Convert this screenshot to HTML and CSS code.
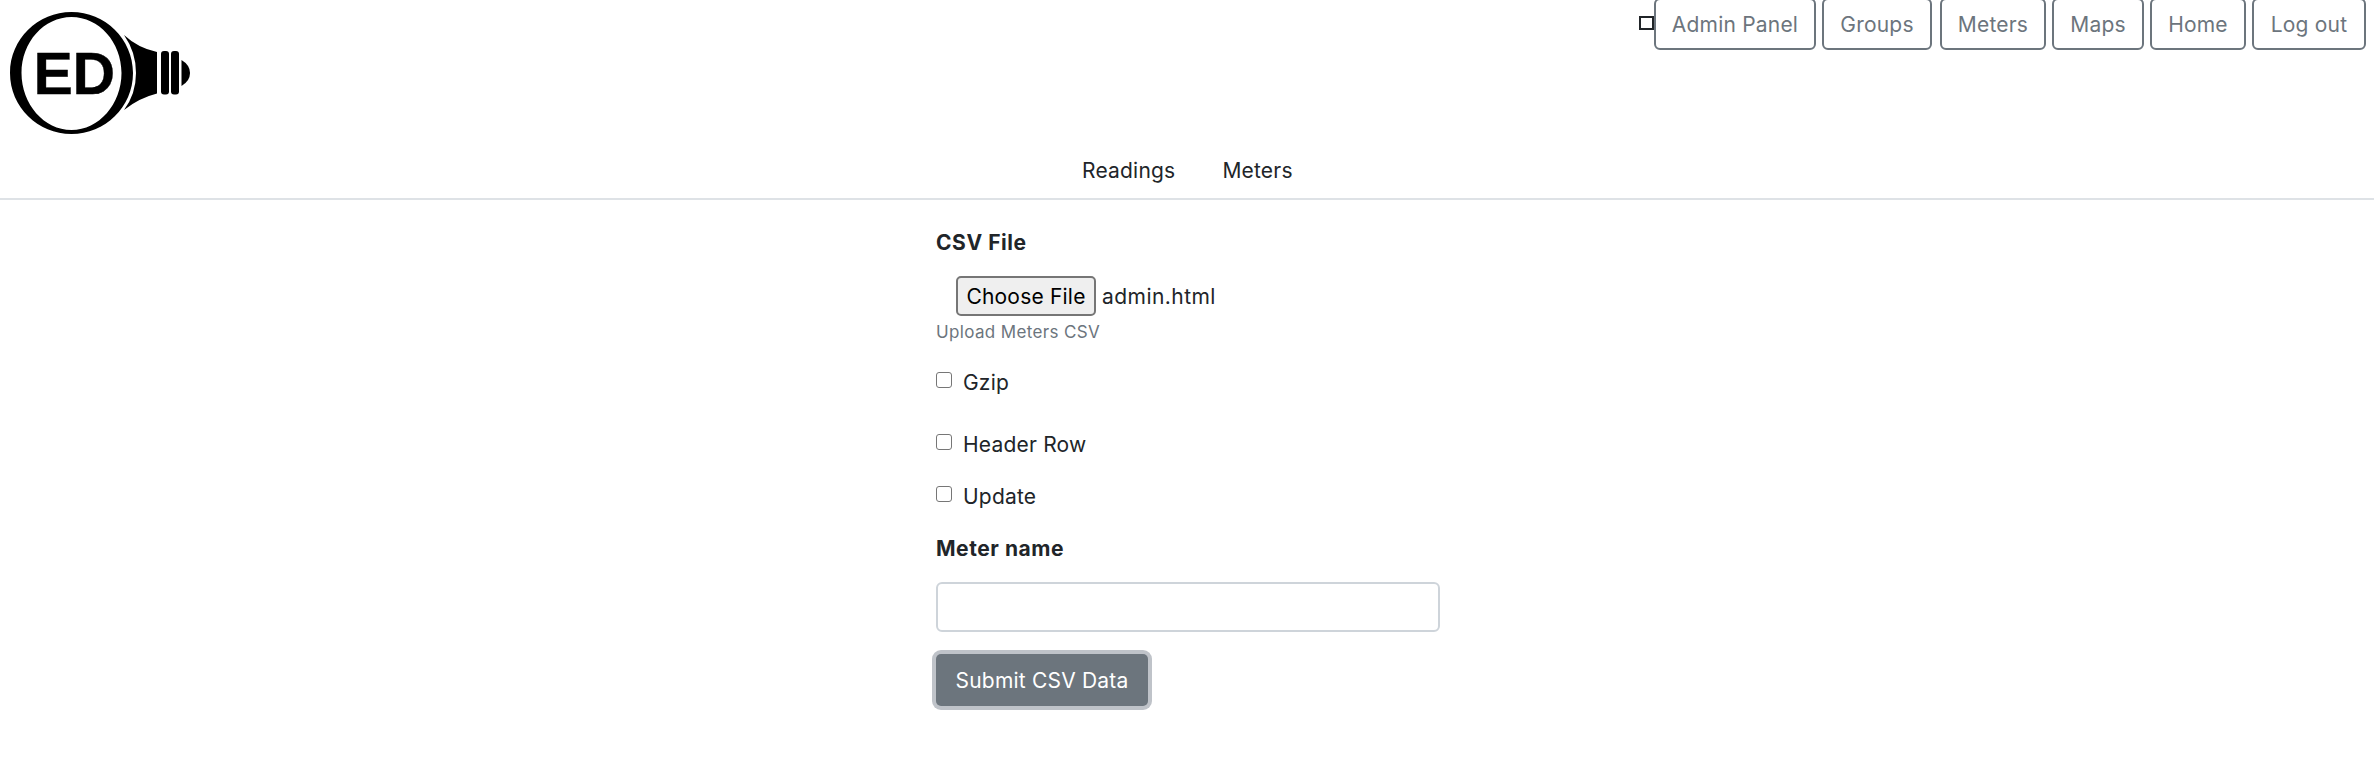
FILE: index.html
```html
<!DOCTYPE html>
<html lang="en">
<head>
<meta charset="utf-8">
<title>Upload CSV</title>
<link rel="stylesheet" href="styles.css">
</head>
<body>
<header class="header">
  <svg class="logo" viewBox="0 0 220 146" role="img" aria-label="ED">
    <path fill-rule="evenodd" d="M71.500 12C105 12 133 39 133 73S105 134 71.500 134S10 107 10 73S38 12 71.500 12ZM71.500 17C44 17 21.500 42 21.500 73S44 130 71.500 130S121.500 104 121.500 73S99 17 71.500 17Z"/>
    <path d="M124 35Q138 48 157 52V93.500Q139 98 124 110Q136 94 136 73T124 35Z"/>
    <rect x="161" y="51" width="8" height="43.500" rx="3"/>
    <rect x="171" y="51" width="8" height="43.500" rx="3"/>
    <path d="M181.500 60Q190 65 190 73T181.500 86Z"/>
    <text class="mark" x="33.500" y="93.500">E</text>
    <text class="mark" x="72.500" y="93.500">D</text>
  </svg>
  <nav class="nav">
    <span class="marker"></span>
    <a class="btn admin">Admin Panel</a>
    <a class="btn groups">Groups</a>
    <a class="btn meters">Meters</a>
    <a class="btn maps">Maps</a>
    <a class="btn home">Home</a>
    <a class="btn logout">Log out</a>
  </nav>
</header>
<div class="tabs"><a class="tab readings">Readings</a><a class="tab">Meters</a></div>
<form class="form">
  <div class="label">CSV File</div>
  <div class="file"><button type="button" class="choose">Choose File</button><span class="filename">admin.html</span></div>
  <div class="hint">Upload Meters CSV</div>
  <label class="check gzip"><input type="checkbox" class="box"><span>Gzip</span></label>
  <label class="check row"><input type="checkbox" class="box"><span>Header Row</span></label>
  <label class="check update"><input type="checkbox" class="box"><span>Update</span></label>
  <div class="label name">Meter name</div>
  <input class="field" type="text" aria-label="Meter name">
  <button type="button" class="submit">Submit CSV Data</button>
</form>
</body>
</html>
```
FILE: styles.css
```css
* { box-sizing: border-box; }
body {
  margin: 0;
  background: #fff;
  color: #212529;
  font: 21px/32px Inter, "Liberation Sans", sans-serif;
  letter-spacing: 0.2px;
}
button, input { font: inherit; letter-spacing: inherit; margin: 0; }
.header { display: flex; justify-content: space-between; align-items: flex-start; height: 146px; padding-right: 8px; }
.logo { width: 220px; height: 146px; }
.mark { font: bold 59px "Liberation Sans", Arial, sans-serif; letter-spacing: 0; stroke: #000; stroke-width: 0.4; stroke-linejoin: round; }
.nav { display: flex; gap: 6px; }
.marker { width: 15px; height: 14px; margin: 16px -6px 0 0; border: 2px solid #212529; }
.btn {
  height: 52px; margin-top: -2px; border: 2px solid #6c757d; border-radius: 6px;
  color: #6c757d; line-height: 50px; text-align: center; white-space: nowrap;
}
.admin { width: 162px; }
.groups { width: 110px; }
.meters { width: 106px; margin-left: 2px; }
.maps { width: 92px; }
.home { width: 96px; }
.logout { width: 114px; }
.tabs { display: flex; gap: 47px; height: 54px; padding: 9px 0 0 1082px; border-bottom: 2px solid #dee2e6; }
.form { display: flex; flex-direction: column; align-items: flex-start; width: 504px; margin-left: 936px; padding: 27px 0 40px; }
.label { font-weight: 700; letter-spacing: 0.55px; }
.file { display: flex; align-items: center; gap: 6px; height: 40px; margin: 17px 0 0 20px; }
.choose { width: 140px; height: 40px; padding: 2px 0 0; border: 2px solid #767676; border-radius: 5px; background: #efefef; color: #000; }
.filename { padding-top: 2px; letter-spacing: 0.45px; }
.hint { margin-top: 4px; color: #6c757d; font-size: 17px; line-height: 24px; letter-spacing: 0.35px; }
.check { display: flex; gap: 11px; height: 32px; }
.box { appearance: none; width: 16px; height: 16px; margin-top: 5px; border: 1px solid #767676; border-radius: 3px; background: #fff; }
.gzip { margin-top: 23px; }
.row { margin-top: 30px; }
.update { margin-top: 20px; }
.name { margin-top: 20px; }
.field { width: 504px; height: 50px; margin-top: 17px; border: 2px solid #ced4da; border-radius: 6px; }
.submit { width: 212px; height: 52px; margin-top: 22px; padding: 2px 0 0; border: 0; border-radius: 5px; background: #6c757d; color: #fff; box-shadow: 0 0 0 4px #bfc3c9; }
```
